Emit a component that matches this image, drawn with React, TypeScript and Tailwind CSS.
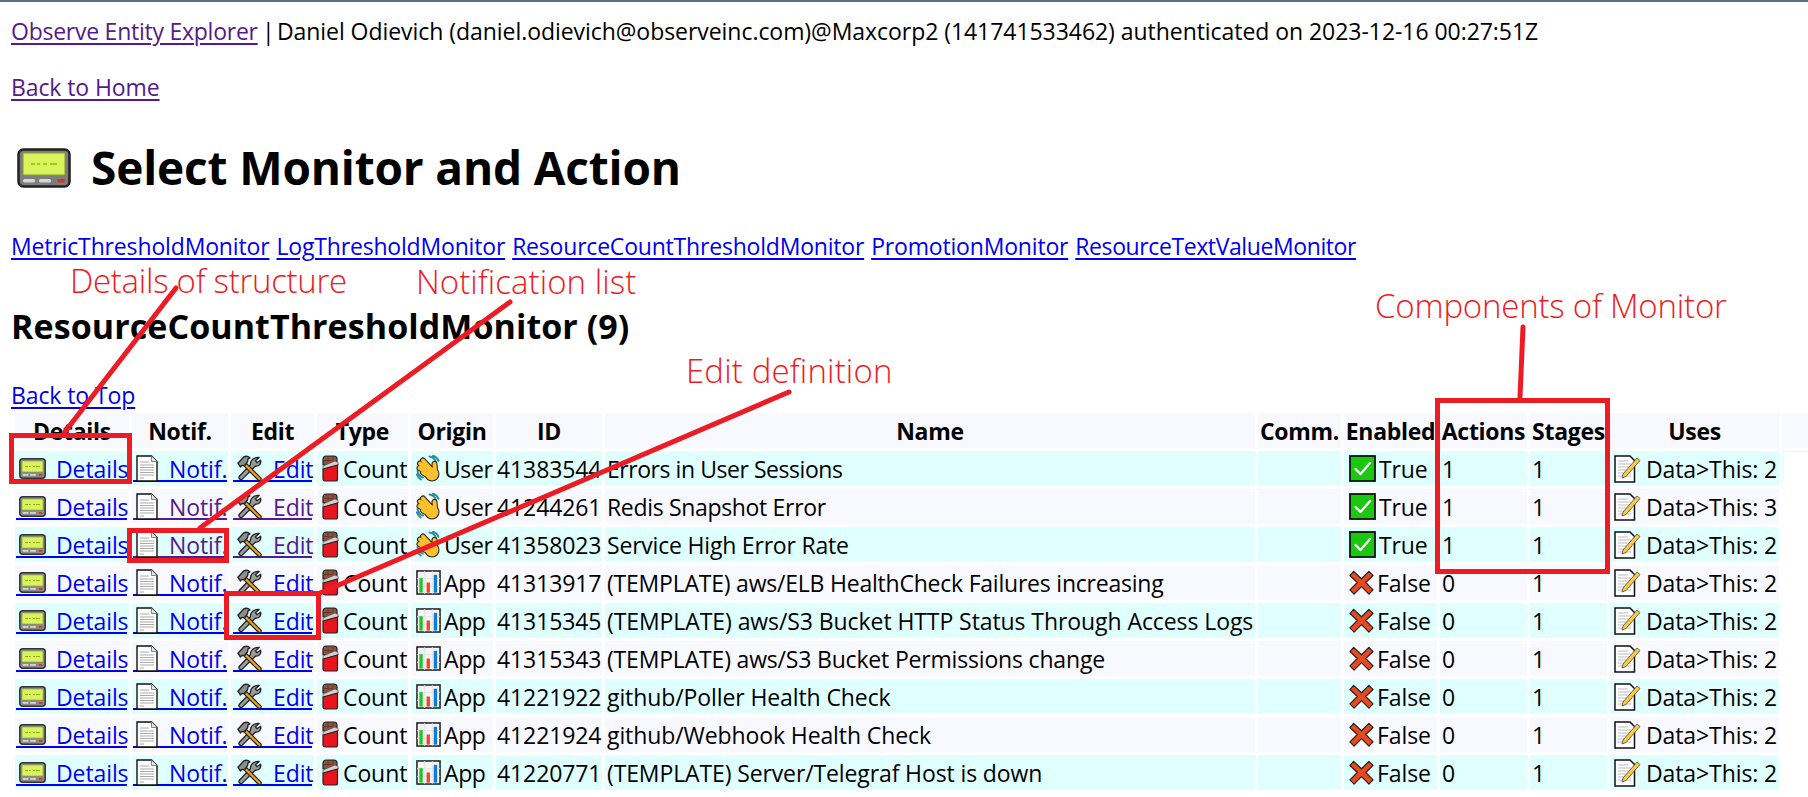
import React from "react";

const Pager = () => (
  <svg viewBox="0 0 27 21" className="w-[27px] h-[21px] shrink-0">
    <rect x="0.8" y="0.8" width="25.4" height="19.4" rx="3" fill="#8c8c8c" stroke="#333" strokeWidth="1.5" />
    <rect x="3" y="3" width="21" height="11" fill="#d9f45a" stroke="#8a9a30" strokeWidth="0.6" />
    <path d="M6 8.500h3M10 8.500h2M14 8.500h2M17 8.500h4" stroke="#98b020" strokeWidth="1" />
    <rect x="3.500" y="16" width="6" height="1.800" rx="0.800" fill="#d5d5d5" />
    <rect x="11" y="16" width="6" height="1.800" rx="0.800" fill="#d5d5d5" />
    <rect x="19.500" y="16" width="4" height="1.800" rx="0.800" fill="#d8351f" />
  </svg>
);

const Page = () => (
  <svg viewBox="0 0 22 27" className="w-[22px] h-[27px] shrink-0">
    <path d="M1 1h14.500l5.500 5.500V26H1z" fill="#fff" stroke="#111" strokeWidth="1.400" />
    <path d="M15.500 1v5.500h5.500" fill="#e5e5e5" stroke="#777" strokeWidth="0.900" />
    <path d="M4 7h9M4 10h14M4 12.500h14M4 15h14M4 17.500h14M4 20h14M4 23h4" stroke="#aaa" strokeWidth="1" />
  </svg>
);

const Tools = () => (
  <svg viewBox="0 0 28 28" className="w-[27px] h-[27px] shrink-0">
    <path d="M24 2.500l-3.800 3.500 1.500 2 3.800-2.500c.8 3-1.200 6-4.500 6l-1 .2L6.500 25c-1.500 1.500-4.500-1-3-3l11.500-12c-.5-3.500 3-8 9-7.500z" fill="#9b9b9b" stroke="#222" strokeWidth="1.400" strokeLinejoin="round" />
    <path d="M11 9l15 15c.5 1.500-1 3-2.500 2.500L8.500 11.500z" fill="#f0a41c" stroke="#222" strokeWidth="1.300" strokeLinejoin="round" />
    <path d="M2 8.500l6-6.500c2-1 5-.5 6.500 1l-2 1-.5 3-3.500 4-2.500-.2-1.500 1.600z" fill="#8e8e8e" stroke="#222" strokeWidth="1.400" strokeLinejoin="round" />
  </svg>
);

const Choc = () => (
  <svg viewBox="0 0 17 27" className="w-[17px] h-[27px] shrink-0">
    <path d="M1 4a3 3 0 0 1 3-3h8a3 3 0 0 1 3 3v6H1z" fill="#8a5240" stroke="#222" strokeWidth="1.200" />
    <path d="M6 1v6M11 1v5M1 5.500h9" stroke="#5f3426" strokeWidth="0.800" />
    <path d="M1 11L13 6l3.200 1.500V10L1 14.500z" fill="#d2d2d2" stroke="#444" strokeWidth="0.600" />
    <path d="M1 14L15.500 10v14a2 2 0 0 1-2 2H3a2 2 0 0 1-2-2z" fill="#e8151f" stroke="#222" strokeWidth="1.200" />
  </svg>
);

const Clap = () => {
  const d = "M14 13L7 5.500M12 15L4 8.500M11.500 18L3.500 13M13 21L7 17.500M19 15L18.500 9";
  return (
    <svg viewBox="0 0 25 27" className="w-[25px] h-[27px] shrink-0">
      <path d="M13.500 1.500c3 .5 5.500 2.500 6.500 5.500M17 .8c2.500.7 4.500 2.500 5.500 5M1.500 16c.5 3 2.500 5.500 5.500 6.500M.8 19.500c.8 2 2.200 3.800 4 5" fill="none" stroke="#2b8ea1" strokeWidth="1.900" strokeLinecap="round" />
      <path d={d} stroke="#222" strokeWidth="6" strokeLinecap="round" />
      <circle cx="16" cy="19" r="7.500" fill="#222" />
      <path d={d} stroke="#fbc02d" strokeWidth="4" strokeLinecap="round" />
      <circle cx="16" cy="19" r="6.500" fill="#fbc02d" />
      <path d="M11 13l-1 1M12 17l-2-1" stroke="#d99a1c" strokeWidth="0.800" />
    </svg>
  );
};

const Chart = () => (
  <svg viewBox="0 0 26 26" className="w-[25px] h-[25px] shrink-0">
    <rect x="1" y="1" width="24" height="24" fill="#f5f5f5" stroke="#222" strokeWidth="1.600" />
    <path d="M9 1v24M17 1v24M1 9h24M1 17h24" stroke="#ddd" strokeWidth="0.800" />
    <rect x="3.500" y="8.500" width="3.500" height="15" fill="#22c32c" />
    <rect x="11" y="13" width="3.500" height="10.500" fill="#f0472a" />
    <rect x="18.500" y="5" width="3.500" height="18.500" fill="#0d7bd8" />
  </svg>
);

const Check = () => (
  <svg viewBox="0 0 27 27" className="w-[27px] h-[27px] shrink-0">
    <rect x="1" y="1" width="25" height="25" fill="#19c80f" stroke="#111" strokeWidth="1.800" />
    <path d="M6.500 14l5 5L21 8" fill="none" stroke="#fff" strokeWidth="2.300" strokeLinecap="round" strokeLinejoin="round" />
  </svg>
);

const Cross = () => (
  <svg viewBox="0 0 27 27" className="w-[25px] h-[27px] shrink-0">
    <path d="M5 1.500L13.500 9.500 21.500 1.500 26 6l-8 7.500 8 8-4.500 4.500-8-8-8 8L1 21.500l8-8L1 6z" fill="#e84a1f" stroke="#222" strokeWidth="1.300" strokeLinejoin="round" />
  </svg>
);

const Memo = () => (
  <svg viewBox="0 0 27 28" className="w-[27px] h-[28px] shrink-0">
    <path d="M1 1h15l4.500 4.500V27H1z" fill="#fff" stroke="#111" strokeWidth="1.500" />
    <path d="M4 6h10M4 9h13M4 12h13M4 15h13M4 18h13M4 21h13" stroke="#bbb" strokeWidth="1" />
    <path d="M8 23l1-4L23 3l3 2.500L12 21.500z" fill="#fbc94a" stroke="#333" strokeWidth="0.700" />
  </svg>
);

const BLUE = "text-[#0000ee]";
const PURPLE = "text-[#551a8b]";
const LINE = "underline decoration-2 underline-offset-[3px]";
const CELLINK = "flex items-center h-[35px] bg-[linear-gradient(currentColor,currentColor)] bg-no-repeat bg-[length:100%_2px] bg-[position:0_29px]";

type Row = {
  visited: boolean;
  origin: "User" | "App";
  id: string;
  name: string;
  nameFit: string;
  on: boolean;
  actions: string;
  uses: string;
};

const rows: Row[] = [
  { visited: false, origin: "User", id: "41383544", name: "Errors in User Sessions", nameFit: "tracking-[-0.45px]", on: true, actions: "1", uses: "Data>This: 2" },
  { visited: true, origin: "User", id: "41244261", name: "Redis Snapshot Error", nameFit: "tracking-[-0.33px]", on: true, actions: "1", uses: "Data>This: 3" },
  { visited: true, origin: "User", id: "41358023", name: "Service High Error Rate", nameFit: "tracking-[-0.2px]", on: true, actions: "1", uses: "Data>This: 2" },
  { visited: false, origin: "App", id: "41313917", name: "(TEMPLATE) aws/ELB HealthCheck Failures increasing", nameFit: "tracking-[-0.22px]", on: false, actions: "0", uses: "Data>This: 2" },
  { visited: false, origin: "App", id: "41315345", name: "(TEMPLATE) aws/S3 Bucket HTTP Status Through Access Logs", nameFit: "tracking-[-0.08px]", on: false, actions: "0", uses: "Data>This: 2" },
  { visited: false, origin: "App", id: "41315343", name: "(TEMPLATE) aws/S3 Bucket Permissions change", nameFit: "tracking-[-0.18px]", on: false, actions: "0", uses: "Data>This: 2" },
  { visited: false, origin: "App", id: "41221922", name: "github/Poller Health Check", nameFit: "tracking-[-0.1px]", on: false, actions: "0", uses: "Data>This: 2" },
  { visited: false, origin: "App", id: "41221924", name: "github/Webhook Health Check", nameFit: "tracking-[-0.1px]", on: false, actions: "0", uses: "Data>This: 2" },
  { visited: false, origin: "App", id: "41220771", name: "(TEMPLATE) Server/Telegraf Host is down", nameFit: "tracking-[-0.12px]", on: false, actions: "0", uses: "Data>This: 2" },
];

const headers = ["Details", "Notif.", "Edit", "Type", "Origin", "ID", "Name", "Comm.", "Enabled", "Actions", "Stages", "Uses", ""];
const widths = [114, 96, 83, 91, 82, 106, 650, 83, 93, 87, 77, 169, 100];

const th = "h-[35px] p-0 bg-[#f8f8ff] font-bold text-center whitespace-nowrap overflow-hidden tracking-[-0.3px]";
const td = "h-[35px] p-0 whitespace-nowrap text-left overflow-hidden";

const Annotation = ({ className, children }: { className: string; children: React.ReactNode }) => (
  <div className={`absolute font-['Open_Sans',sans-serif] font-light text-[#ed1c24] text-[33px] leading-[40px] whitespace-nowrap ${className}`}>{children}</div>
);

export default function App() {
  return (
    <div className="relative w-[1808px] h-[797px] overflow-hidden bg-white border-t-2 border-[#5f6f7a] font-['Open_Sans',sans-serif] text-[23px] leading-[32px] text-black tracking-[-0.1px]">
      <div className="pl-[11px] pt-[13px]">
        <p>
          <a className={`${LINE} ${PURPLE} tracking-[-0.25px]`}>Observe Entity Explorer</a>
          <span className="tracking-[-1.8px]"> | </span>
          <span className="tracking-[-0.05px]">Daniel Odievich (daniel.odievich@observeinc.com)@Maxcorp2 (141741533462) authenticated on 2023-12-16 00:27:51Z</span>
        </p>
        <p className="mt-[24px]">
          <a className={`${LINE} ${PURPLE}`}>Back to Home</a>
        </p>
        <h1 className="mt-[32px] h-[64px] text-[46px] leading-[64px] font-bold flex items-center gap-[20px] pl-[6px] tracking-[-0.16px]">
          <svg viewBox="0 0 54 40" className="w-[54px] h-[40px] shrink-0 translate-y-px">
            <rect x="1.500" y="1.500" width="51" height="37" rx="5" fill="#7d7d7d" stroke="#222" strokeWidth="2.500" />
            <rect x="6" y="5" width="42" height="22" fill="#d9f45a" stroke="#8a9a30" strokeWidth="1" />
            <path d="M14 16h4M20 16h3M26 16h4M33 16h7" stroke="#98b020" strokeWidth="1.500" />
            <rect x="6" y="31" width="12" height="3.500" rx="1.500" fill="#d5d5d5" />
            <rect x="22" y="31" width="12" height="3.500" rx="1.500" fill="#d5d5d5" />
            <rect x="40" y="31" width="8" height="3.500" rx="1.500" fill="#d8351f" />
          </svg>
          <span>Select Monitor and Action</span>
        </h1>
        <p className="mt-[31px] flex gap-[7px]">
          <a className={`${LINE} ${BLUE} tracking-[-0.15px]`}>MetricThresholdMonitor</a>
          <a className={`${LINE} ${BLUE} tracking-[-0.18px]`}>LogThresholdMonitor</a>
          <a className={`${LINE} ${BLUE} tracking-[-0.2px]`}>ResourceCountThresholdMonitor</a>
          <a className={`${LINE} ${BLUE} tracking-[-0.18px]`}>PromotionMonitor</a>
          <a className={`${LINE} ${BLUE} tracking-[-0.4px]`}>ResourceTextValueMonitor</a>
        </p>
        <h2 className="mt-[40px] text-[34px] leading-[48px] font-bold tracking-[0.07px]">ResourceCountThresholdMonitor (9)</h2>
        <p className="mt-[29px]">
          <a className={`${LINE} ${BLUE}`}>Back to Top</a>
        </p>
      </div>
      <table className="ml-[12px] -mt-[1px] table-fixed border-separate border-spacing-[3px] w-[1873px]">
        <colgroup>
          {widths.map((w, i) => (
            <col key={i} style={{ width: w }} />
          ))}
        </colgroup>
        <thead>
          <tr>
            {headers.map((h, i) => (
              <th key={i} className={th}>{h}</th>
            ))}
          </tr>
        </thead>
        <tbody>
          {rows.map((r, i) => {
            const bg = i % 2 === 0 ? "bg-[#e0ffff]" : "bg-[#f8f8ff]";
            const cell = `${td} ${bg}`;
            const c = r.visited ? PURPLE : BLUE;
            return (
              <tr key={r.id}>
                <td className={cell}><a className={`${CELLINK} ${BLUE} ml-px w-[111px] pl-[3px] gap-[10px]`}><Pager /><span>Details</span></a></td>
                <td className={cell}><a className={`${CELLINK} ${c} ml-px w-[94px] pl-[3px] gap-[11px]`}><Page /><span>Notif.</span></a></td>
                <td className={cell}><a className={`${CELLINK} ${c} ml-[2px] w-[79px] pl-[3px] gap-[10px]`}><Tools /><span>Edit</span></a></td>
                <td className={cell}><div className="flex items-center h-[35px] pl-[5px] gap-[4px]"><Choc /><span>Count</span></div></td>
                <td className={cell}><div className="flex items-center h-[35px] pl-[5px] gap-[3px] tracking-[-0.4px]">{r.origin === "User" ? <Clap /> : <Chart />}<span>{r.origin}</span></div></td>
                <td className={`${cell} pl-px`}>{r.id}</td>
                <td className={`${cell} pl-[2px] ${r.nameFit}`}>{r.name}</td>
                <td className={cell}></td>
                <td className={cell}><div className="flex items-center h-[35px] pl-[5px] gap-[3px]">{r.on ? <Check /> : <Cross />}<span>{r.on ? "True" : "False"}</span></div></td>
                <td className={`${cell} pl-[2px]`}>{r.actions}</td>
                <td className={`${cell} pl-[2px]`}>1</td>
                <td className={cell}><div className="flex items-center h-[35px] pl-[4px] gap-[5px]"><Memo /><span>{r.uses}</span></div></td>
                <td className={i === 0 ? "h-[35px] p-0 bg-white border-t border-l border-[#e0ffff]" : "h-[35px] p-0 bg-white"}></td>
              </tr>
            );
          })}
        </tbody>
      </table>

      <Annotation className="left-[70px] top-[259px] tracking-[-0.28px]">Details of structure</Annotation>
      <Annotation className="left-[416px] top-[260px] tracking-[0.05px]">Notification list</Annotation>
      <Annotation className="left-[686px] top-[349px] tracking-[0.15px]">Edit definition</Annotation>
      <Annotation className="left-[1375px] top-[284px] tracking-[-0.2px]">Components of Monitor</Annotation>

      <svg className="absolute left-0 -top-[2px] pointer-events-none" width="1808" height="797" viewBox="0 0 1808 797">
        <g fill="none" stroke="#ed1c24" strokeWidth="5" strokeLinecap="round">
          <path d="M176 288L64 433" />
          <path d="M510 302L200 528" />
          <path d="M789 392L320 593" />
          <path d="M1523 327L1520 397" />
        </g>
        <g fill="none" stroke="#ed1c24" strokeWidth="5">
          <rect x="11.500" y="435.500" width="118" height="46" />
          <rect x="129.500" y="530.500" width="97" height="30" />
          <rect x="226.500" y="593.500" width="92" height="44" />
          <rect x="1437.500" y="400.500" width="170" height="171" />
        </g>
      </svg>
    </div>
  );
}
